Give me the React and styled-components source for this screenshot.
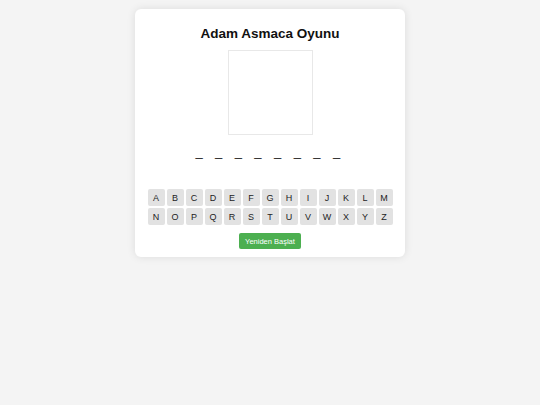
import React, { useState } from "react";
import styled, { createGlobalStyle } from "styled-components";

const GlobalStyle = createGlobalStyle`
  body {
    margin: 0;
    background: #f4f4f4;
    font-family: "Liberation Sans", Arial, sans-serif;
  }
`;

const Page = styled.div`
  display: flex;
  justify-content: center;
  padding-top: 9px;
  min-height: 396px;
`;

const Card = styled.div`
  width: 270px;
  height: 248px;
  box-sizing: border-box;
  background: #fff;
  border-radius: 6px;
  box-shadow: 0 0 8px rgba(0, 0, 0, 0.1);
  padding: 15px 0 8px;
  display: flex;
  flex-direction: column;
  align-items: center;
`;

const Title = styled.h1`
  margin: 0;
  font-size: 13.5px;
  line-height: 20px;
  font-weight: bold;
  color: #111;
`;

const Gallows = styled.div`
  margin-top: 6px;
  width: 85px;
  height: 85px;
  box-sizing: border-box;
  border: 1px solid #e8e8e8;
`;

const Word = styled.div`
  margin-top: 7px;
  font-size: 13px;
  line-height: 20px;
  letter-spacing: 4.4px;
  color: #111;
  white-space: pre;
`;

const Keyboard = styled.div`
  margin-top: 27px;
  display: grid;
  grid-template-columns: repeat(13, 17px);
  gap: 2px;
`;

const Key = styled.button`
  width: 17px;
  height: 17px;
  padding: 0;
  border: none;
  border-radius: 2px;
  background: ${(p) => (p.$used ? "#c8c8c8" : "#e2e2e2")};
  color: #222;
  font-family: "Liberation Sans", Arial, sans-serif;
  font-size: 9px;
  display: flex;
  align-items: center;
  justify-content: center;
  cursor: pointer;
  -webkit-font-smoothing: antialiased;
`;

const Restart = styled.button`
  margin-top: 8px;
  width: 62px;
  height: 16px;
  padding: 0;
  border: none;
  border-radius: 2px;
  background: #4caf50;
  color: #fff;
  font-family: "Liberation Sans", Arial, sans-serif;
  font-size: 7.5px;
  cursor: pointer;
  -webkit-font-smoothing: antialiased;
`;

const letters = "ABCDEFGHIJKLMNOPQRSTUVWXYZ".split("");

export default function App() {
  const [used, setUsed] = useState([]);
  const word = Array(8).fill("_").join(" ");

  return (
    <>
      <GlobalStyle />
      <Page>
        <Card>
          <Title>Adam Asmaca Oyunu</Title>
          <Gallows />
          <Word>{word}</Word>
          <Keyboard>
            {letters.map((l) => (
              <Key
                key={l}
                $used={used.includes(l)}
                onClick={() => setUsed([...used, l])}
              >
                {l}
              </Key>
            ))}
          </Keyboard>
          <Restart onClick={() => setUsed([])}>Yeniden Başlat</Restart>
        </Card>
      </Page>
    </>
  );
}
